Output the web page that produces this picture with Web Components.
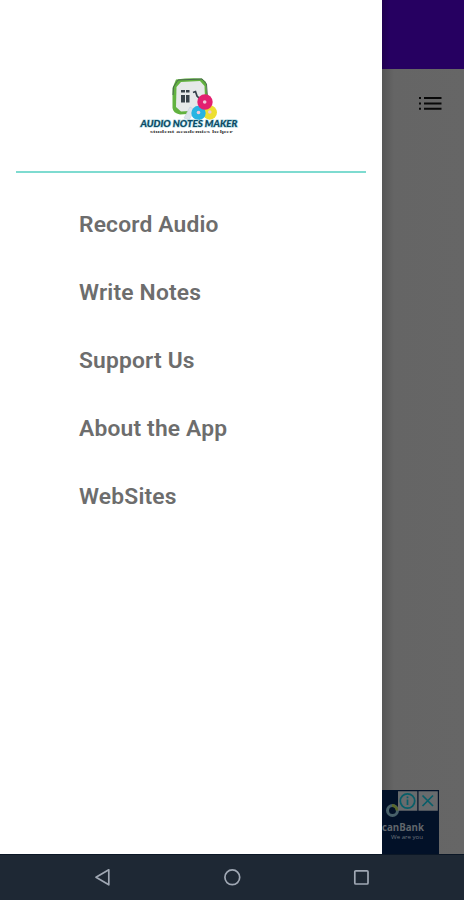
<!DOCTYPE html>
<html lang="en">
<head>
<meta charset="utf-8">
<meta name="viewport" content="width=device-width, initial-scale=1">
<title>Audio Notes Maker</title>
<style>
html, body {
	margin: 0;
	height: 100%;
	overflow: hidden;
	font-family: Roboto, "Liberation Sans", sans-serif;
}
</style>
</head>
<body>
<notes-app>
	<nav-drawer slot="drawer">
		<app-logo slot="header"></app-logo>
		<drawer-item>Record Audio</drawer-item>
		<drawer-item>Write Notes</drawer-item>
		<drawer-item>Support Us</drawer-item>
		<drawer-item>About the App</drawer-item>
		<drawer-item>WebSites</drawer-item>
	</nav-drawer>
	<dimmed-page slot="page"><ad-banner></ad-banner></dimmed-page>
	<system-bar slot="system"></system-bar>
</notes-app>

<script>
const define = (name, styles, template) => {
	customElements.define(name, class extends HTMLElement {
		constructor() {
			super();
			this.attachShadow({ mode: "open" });
			this.shadowRoot.innerHTML = `<style>${styles}</style>${template}`;
		}
	});
};

define("notes-app", /*css*/ `
:host {
	display: flex;
	flex-direction: column;
	width: 464px;
	height: 900px;
	overflow: hidden;
}

main {
	display: flex;
	flex: 1;
	min-height: 0;
}
`, /*html*/ `
<main><slot name="drawer"></slot><slot name="page"></slot></main>
<slot name="system"></slot>
`);

define("nav-drawer", /*css*/ `
:host {
	display: flex;
	flex-direction: column;
	flex: 0 0 382px;
	box-sizing: border-box;
	padding: 0 16px;
	background: #fff;
}

header {
	display: flex;
	justify-content: center;
	height: 171px;
	padding: 74px 6px 0 0;
	box-sizing: border-box;
}

hr {
	width: 100%;
	height: 2px;
	margin: 0;
	border: 0;
	background: #7edbd0;
}

nav {
	display: flex;
	flex-direction: column;
	padding: 17px 0 0 63px;
}
`, /*html*/ `
<header><slot name="header"></slot></header>
<hr>
<nav><slot></slot></nav>
`);

define("drawer-item", /*css*/ `
:host {
	display: flex;
	align-items: center;
	height: 68.2px;
	color: #6d6d6d;
	font-size: 22.8px;
	font-weight: 600;
	letter-spacing: .18px;
	white-space: nowrap;
}
`, `<slot></slot>`);

define("app-logo", /*css*/ `
:host, svg {
	display: block;
	width: 104px;
	height: 64px;
}
`, /*html*/ `
<svg viewBox="136 74 104 64" aria-label="Audio Notes Maker">
	<path d="M176 79.5Q190 77.500 202 78.500L206 82Q208 96 207.500 111L202 113 180 114.500Q173 113 172.500 108L172.500 88Z" fill="#62b23f"/>
	<path d="M173 95 173.500 87 178 80 202 79 206.500 84 207.500 98" fill="none" stroke="#4a6a50" stroke-width="1"/>
	<path d="M181 82 200 81 204.500 86 205.500 110 181 111.500 176 107 176.500 87Z" fill="#e6e9e9"/>
	<path d="M181 90h4v2.500h-4zm5 0h3.500v2.500h-3.500zm-5 5h4v7.500h-4zm5 0h3.500v7.500h-3.500z" fill="#39434a"/>
	<path d="M193 92.500 195.500 91.500 197 96 200 99" fill="none" stroke="#35404a" stroke-width="1.700"/>
	<path d="M190 107 184 118 189 120 195 110Z" fill="#dce4ec" stroke="#c3cedb" stroke-width=".6"/>
	<circle cx="209.800" cy="112.500" r="7.200" fill="#eddf32"/>
	<circle cx="198.500" cy="113" r="7.200" fill="#28b4e2"/>
	<circle cx="205" cy="102" r="7.700" fill="#e3206f"/>
	<g fill="#f0c9d9"><circle cx="204.700" cy="102" r="1.800"/><circle cx="209.800" cy="112" r="1.800"/><circle cx="198.500" cy="112.500" r="1.800"/></g>
	<text x="140.500" y="126.700" textLength="97" lengthAdjust="spacingAndGlyphs" font-family="Lato, sans-serif" font-size="9" font-weight="900" font-style="italic" fill="#0d4a63" stroke="#a8d6e2" stroke-width="1.200" paint-order="stroke">AUDIO NOTES MAKER</text>
	<text x="150" y="133" textLength="83" lengthAdjust="spacingAndGlyphs" font-family="Liberation Serif, serif" font-size="4.800" font-weight="700" fill="#444">student academics helper</text>
</svg>
`);

define("dimmed-page", /*css*/ `
:host {
	display: flex;
	flex-direction: column;
	flex: 1;
	min-width: 0;
	background: linear-gradient(90deg, #565656, #656565 12px, #666 100%);
}

.toolbar {
	height: 68.5px;
	flex: none;
	background: linear-gradient(90deg, #200050, #260061 8px);
}

.actions {
	display: flex;
	justify-content: flex-end;
	flex: 1;
	padding: 27px 22.5px 0 0;
}

svg {
	width: 24px;
	height: 16px;
}
`, /*html*/ `
<div class="toolbar"></div>
<div class="actions">
	<svg viewBox="0 0 24 16" fill="#080808" aria-hidden="true">
		<path d="M1 1h2v2H1zm5 0h17.5v2H6zM1 6.500h2v2H1zm5 0h17.500v2H6zM1 11.800h2v2H1zm5 0h17.500v2H6z"/>
	</svg>
</div>
<slot></slot>
`);

define("ad-banner", /*css*/ `
:host, svg {
	display: block;
	width: 57px;
	height: 64px;
}
`, /*html*/ `
<svg viewBox="382 790 57 64">
	<path d="M382 790h57v64h-57z" fill="#021128"/>
	<circle cx="392.500" cy="810.500" r="5" fill="none" stroke="#48616a" stroke-width="3"/>
	<path d="M392 805.500a5 5 0 0 1 5 5" fill="none" stroke="#59682d" stroke-width="3"/>
	<path d="M398 791.300h19.300v19.500H398zm20.500 0h19.300v19.500h-19.300z" fill="#686b6d"/>
	<g fill="none" stroke="#075e69" stroke-width="1.700">
		<circle cx="407.500" cy="801" r="7.200"/>
		<path d="M407.500 799.500v5.500M407.500 796.500v1.800M422.500 795.500l10.500 10.500M433 795.500 422.500 806"/>
	</g>
	<text x="382" y="831.300" textLength="42" lengthAdjust="spacingAndGlyphs" font-family="Open Sans, sans-serif" font-size="10" font-weight="700" fill="#60666c">canBank</text>
	<text x="391" y="839.200" textLength="32" lengthAdjust="spacingAndGlyphs" font-family="Open Sans, sans-serif" font-size="6" fill="#6c737c">We are you</text>
</svg>
`);

define("system-bar", /*css*/ `
:host {
	display: flex;
	justify-content: center;
	flex: 0 0 46px;
	box-sizing: border-box;
	gap: 109px;
	padding-top: 13px;
	border-top: 1.5px solid #0b1726;
	background: #1e2834;
}

svg {
	width: 20px;
	height: 20px;
	fill: none;
	stroke: #a0a8b4;
	stroke-width: 1.7;
}
`, /*html*/ `
<svg viewBox="0 0 20 20"><path d="M15.8 1.800v15L3 9.300Z" stroke-linejoin="round"/></svg>
<svg viewBox="0 0 20 20"><circle cx="10.300" cy="9.300" r="7.400"/></svg>
<svg viewBox="0 0 20 20"><rect x="3.800" y="2.800" width="13.200" height="13.200" rx="1"/></svg>
`);
</script>
</body>
</html>
